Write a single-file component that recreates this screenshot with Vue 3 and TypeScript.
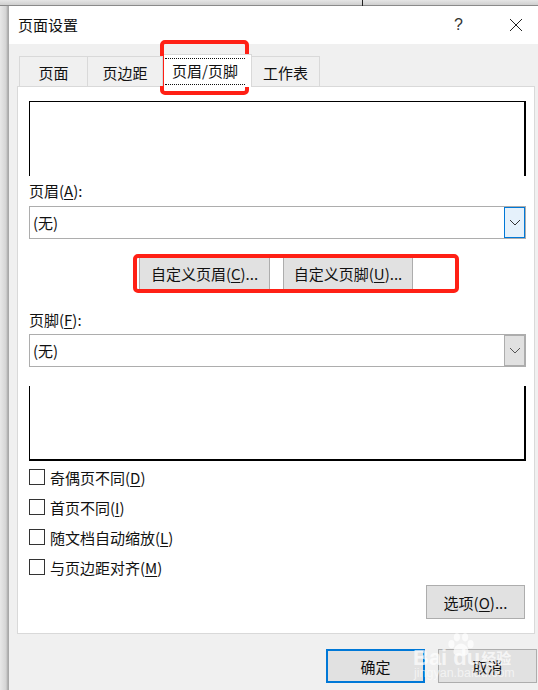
<script setup lang="ts">
const checks: { text: string; key: string }[] = [
  { text: '奇偶页不同(', key: 'D' },
  { text: '首页不同(', key: 'I' },
  { text: '随文档自动缩放(', key: 'L' },
  { text: '与页边距对齐(', key: 'M' },
]
</script>

<template>
  <div class="page">
    <div class="backdrop"><span class="backline"></span></div>
    <div class="window">
      <div class="titlebar">
        <span class="title">页面设置</span>
        <span class="help">?</span>
        <svg class="close" width="14" height="14" viewBox="0 0 14 14"><path d="M1 1 13 13M13 1 1 13" stroke="#222" stroke-width="1" fill="none" /></svg>
      </div>
      <div class="content">
        <div class="tabs">
          <div class="tab t1">页面</div>
          <div class="tab t2">页边距</div>
          <div class="tab active"><span class="focus">页眉/页脚</span></div>
          <div class="tab t4">工作表</div>
        </div>
        <div class="panel">
          <div class="preview head"></div>
          <div class="label l1">页眉(<u>A</u>):</div>
          <div class="combo">
            <span class="val">(无)</span>
            <span class="arrow hot"><svg width="12" height="7" viewBox="0 0 12 7"><path d="M1 1 6 6 11 1" stroke="#333" fill="none" /></svg></span>
          </div>
          <div class="custom">
            <button class="btn b1">自定义页眉(<u>C</u>)...</button>
            <button class="btn b2">自定义页脚(<u>U</u>)...</button>
          </div>
          <div class="label l2">页脚(<u>F</u>):</div>
          <div class="combo">
            <span class="val">(无)</span>
            <span class="arrow"><svg width="12" height="7" viewBox="0 0 12 7"><path d="M1 1 6 6 11 1" stroke="#555" fill="none" /></svg></span>
          </div>
          <div class="preview foot"></div>
          <div class="checks">
            <div v-for="c in checks" :key="c.key" class="check">
              <span class="box"></span>
              <span>{{ c.text }}<u>{{ c.key }}</u>)</span>
            </div>
          </div>
          <div class="optrow"><button class="btn opt">选项(<u>O</u>)...</button></div>
        </div>
        <div class="actions">
          <button class="btn ok">确定</button>
          <button class="btn cancel">取消</button>
        </div>
      </div>
    </div>
    <div class="mark m1"></div>
    <div class="mark m2"></div>
    <div class="wm">
      <svg class="paw" width="26" height="25" viewBox="0 0 38 36">
        <g fill="#fff" fill-opacity=".7">
          <ellipse cx="5" cy="16" rx="4.5" ry="6" />
          <ellipse cx="13" cy="6" rx="4.5" ry="6" />
          <ellipse cx="25" cy="6" rx="4.5" ry="6" />
          <ellipse cx="33" cy="16" rx="4.5" ry="6" />
          <path d="M19 15c-6 0-11 7-11 12 0 6 6 6 11 6s11 0 11-6c0-5-5-12-11-12z" />
        </g>
      </svg>
      <div class="wm-main"><span>Bai</span><span class="du">du</span><span class="cjk">经验</span></div>
      <div class="wm-sub">jingyan.baidu.com</div>
    </div>
  </div>
</template>

<style>
html, body { margin: 0; background: #f0f0f0; }
</style>

<style scoped>
.page {
  position: relative;
  width: 538px;
  height: 690px;
  overflow: hidden;
  background: linear-gradient(90deg, #e8e8e8, #d4d4d4 6px, #a8a8a8 8px);
  font-family: "Noto Sans CJK SC", "Open Sans", sans-serif;
  font-size: 15px;
  color: #111;
  display: flex;
  flex-direction: column;
}
u { text-underline-offset: 2px; }
.backdrop {
  height: 6px;
  flex: none;
  background: linear-gradient(#e6e6e6, #cfcfcf);
  border-bottom: 1px solid #8a8a8a;
  box-sizing: border-box;
  padding-left: 362px;
}
.backline { display: block; width: 1px; height: 6px; background: #222; }
.window { flex: 1; margin-left: 9px; background: #f0f0f0; display: flex; flex-direction: column; }
.titlebar {
  height: 38px;
  flex: none;
  background: #fff;
  display: flex;
  align-items: center;
  padding-left: 9px;
  padding-bottom: 1px;
  box-sizing: border-box;
}
.title { font-size: 15px; flex: 1; }
.help { font-size: 16px; color: #333; width: 10px; margin-right: 2px; font-family: "Liberation Sans", sans-serif; }
.close { margin-left: 43px; margin-right: 15px; }
.content { flex: 1; display: flex; flex-direction: column; padding: 10px 0 0 8px; }
.tabs { height: 32px; flex: none; display: flex; align-items: flex-end; padding-left: 2px; position: relative; z-index: 1; }
.tab {
  height: 30px;
  box-sizing: border-box;
  border: 1px solid #d9d9d9;
  border-bottom: none;
  border-left: none;
  background: #f0f0f0;
  display: flex;
  align-items: center;
  justify-content: center;
  padding-top: 2px;
}
.t1 { width: 69px; border-left: 1px solid #d9d9d9; }
.t2 { width: 75px; }
.t4 { width: 68px; }
.active {
  width: 88px;
  height: 33px;
  margin-bottom: -1px;
  background: #fff;
  margin-left: 1px;
  padding-top: 0;
  justify-content: flex-start;
}
.focus {
  border: 1px dotted #111;
  border-left: none;
  border-right: none;
  height: 27px;
  line-height: 24px;
  width: 80px;
  margin-left: 1px;
  text-align: center;
  box-sizing: border-box;
  white-space: nowrap;
}
.panel {
  width: 518px;
  height: 548px;
  flex: none;
  box-sizing: border-box;
  background: #fff;
  border: 1px solid #d9d9d9;
  padding: 14px 9px 0 11px;
  display: flex;
  flex-direction: column;
}
.preview { width: 497px; height: 75px; flex: none; box-sizing: border-box; border-left: 1px solid #000; border-right: 2px solid #000; }
.head { border-top: 1px solid #000; }
.foot { border-bottom: 2px solid #000; margin-top: 19px; }
.label { line-height: 20px; }
.l1 { margin-top: 5px; }
.l2 { margin-top: 20px; }
.combo {
  margin-top: 5px;
  width: 497px;
  height: 33px;
  flex: none;
  box-sizing: border-box;
  border: 1px solid #adadad;
  display: flex;
  align-items: center;
  padding-left: 3px;
}
.l2 + .combo { margin-top: 4px; }
.val { flex: 1; }
.arrow {
  width: 21px;
  height: 31px;
  box-sizing: border-box;
  background: #e1e1e1;
  border: 1px solid #adadad;
  display: flex;
  align-items: center;
  justify-content: center;
}
.hot { background: #e5f1fb; border: 1px solid #0078d7; }
.btn {
  font: inherit;
  color: #111;
  background: #e1e1e1;
  border: 1px solid #adadad;
  padding: 0;
  box-sizing: border-box;
}
.custom { display: flex; gap: 13px; margin: 18px 0 0 110px; }
.custom .btn { width: 131px; height: 33px; white-space: nowrap; }
.custom .b2 { width: 130px; }
.checks { margin-top: 1px; display: flex; flex-direction: column; }
.check { height: 30px; display: flex; align-items: center; gap: 4px; }
.box { width: 16px; height: 16px; box-sizing: border-box; border: 1px solid #333; background: #fff; flex: none; margin-right: 1px; }
.optrow { display: flex; justify-content: flex-end; margin-top: 3px; }
.opt { width: 99px; height: 34px; }
.actions { display: flex; gap: 13px; margin: 15px 0 0 309px; }
.ok { width: 99px; height: 34px; border: 2px solid #0078d7; }
.cancel { width: 99px; height: 34px; }
.mark { position: absolute; border: 4px solid #ff2015; border-radius: 5px; box-sizing: border-box; pointer-events: none; }
.m1 { left: 160px; top: 40px; width: 89px; height: 55px; }
.m2 { left: 133px; top: 254px; width: 326px; height: 39px; }
.wm { position: absolute; left: 412px; top: 630px; width: 126px; height: 60px; pointer-events: none; color: rgba(255,255,255,.7); }
.paw { position: absolute; left: 36px; top: 3px; }
.wm-main { position: absolute; left: 1px; top: 16px; display: flex; align-items: center; font: 700 22px/24px "Liberation Sans", sans-serif; white-space: nowrap; }
.du { margin-left: 6px; }
.cjk { margin-left: 1px; font: 700 15px/22px "Noto Sans CJK SC", sans-serif; }
.wm-sub { position: absolute; left: 2px; top: 36px; font: 400 12.5px/14px "Liberation Sans", sans-serif; white-space: nowrap; color: rgba(255,255,255,.6); }
</style>
